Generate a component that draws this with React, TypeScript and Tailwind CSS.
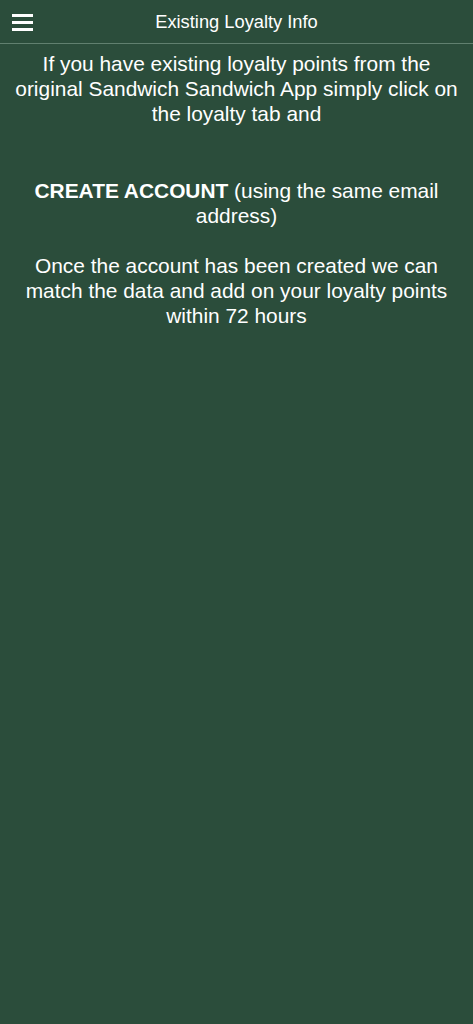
export default function App() {
  return (
    <div
      className="min-h-[1024px] w-full bg-[#2b4d3b] text-white"
      style={{ fontFamily: '"Liberation Sans", Arial, sans-serif' }}
    >
      <header className="relative flex h-[44px] items-center justify-center border-b border-[#61806f]">
        <button className="absolute left-[12px] top-[14px] flex flex-col gap-[4px]">
          <span className="block h-[3px] w-[21px] bg-white" />
          <span className="block h-[3px] w-[21px] bg-white" />
          <span className="block h-[3px] w-[21px] bg-white" />
        </button>
        <h1 className="text-[18.3px] font-normal">Existing Loyalty Info</h1>
      </header>
      <div className="px-[10px] pt-[7px] text-center text-[20.9px] leading-[25px]">
        <p>
          If you have existing loyalty points from the original Sandwich Sandwich App simply click on the loyalty tab and
        </p>
        <p className="mt-[52px]">
          <span className="font-bold">CREATE ACCOUNT</span> (using the same email address)
        </p>
        <p className="mt-[25px]">
          Once the account has been created we can match the data and add on your loyalty points within 72 hours
        </p>
      </div>
    </div>
  )
}
